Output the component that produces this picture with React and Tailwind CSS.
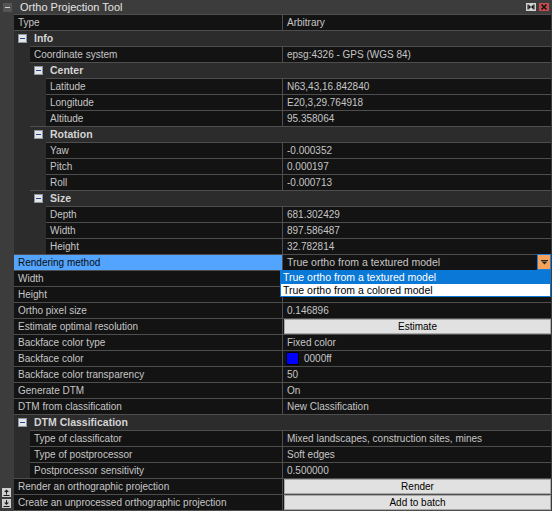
import React from 'react';

const rows = [
  { kind: 'prop', level: 0, label: 'Type', value: 'Arbitrary' },
  { kind: 'group', level: 0, label: 'Info' },
  { kind: 'prop', level: 1, label: 'Coordinate system', value: 'epsg:4326 - GPS (WGS 84)' },
  { kind: 'group', level: 1, label: 'Center' },
  { kind: 'prop', level: 2, label: 'Latitude', value: 'N63,43,16.842840' },
  { kind: 'prop', level: 2, label: 'Longitude', value: 'E20,3,29.764918' },
  { kind: 'prop', level: 2, label: 'Altitude', value: '95.358064' },
  { kind: 'group', level: 1, label: 'Rotation' },
  { kind: 'prop', level: 2, label: 'Yaw', value: '-0.000352' },
  { kind: 'prop', level: 2, label: 'Pitch', value: '0.000197' },
  { kind: 'prop', level: 2, label: 'Roll', value: '-0.000713' },
  { kind: 'group', level: 1, label: 'Size' },
  { kind: 'prop', level: 2, label: 'Depth', value: '681.302429' },
  { kind: 'prop', level: 2, label: 'Width', value: '897.586487' },
  { kind: 'prop', level: 2, label: 'Height', value: '32.782814' },
  { kind: 'select', level: 0, label: 'Rendering method', value: 'True ortho from a textured model' },
  // values of these two rows sit under the open dropdown
  { kind: 'prop', level: 0, label: 'Width', value: '' },
  { kind: 'prop', level: 0, label: 'Height', value: '' },
  { kind: 'prop', level: 0, label: 'Ortho pixel size', value: '0.146896' },
  { kind: 'button', level: 0, label: 'Estimate optimal resolution', value: 'Estimate' },
  { kind: 'prop', level: 0, label: 'Backface color type', value: 'Fixed color' },
  { kind: 'color', level: 0, label: 'Backface color', value: '0000ff' },
  { kind: 'prop', level: 0, label: 'Backface color transparency', value: '50' },
  { kind: 'prop', level: 0, label: 'Generate DTM', value: 'On' },
  { kind: 'prop', level: 0, label: 'DTM from classification', value: 'New Classification' },
  { kind: 'group', level: 0, label: 'DTM Classification' },
  { kind: 'prop', level: 1, label: 'Type of classificator', value: 'Mixed landscapes, construction sites, mines' },
  { kind: 'prop', level: 1, label: 'Type of postprocessor', value: 'Soft edges' },
  { kind: 'prop', level: 1, label: 'Postprocessor sensitivity', value: '0.500000' },
  { kind: 'button', level: 0, label: 'Render an orthographic projection', value: 'Render' },
  { kind: 'button', level: 0, label: 'Create an unprocessed orthographic projection', value: 'Add to batch' },
];

const indentClass = ['w-0', 'w-[16px]', 'w-[32px]'];
const labelClass = ['w-[269px]', 'w-[253px]', 'w-[237px]'];

function Collapse() {
  return (
    <div className="w-[9px] h-[9px] bg-[#e6e6e6] border border-[#8c97aa] flex items-center justify-center shrink-0">
      <div className="w-[5px] h-[1px] bg-[#24459c]" />
    </div>
  );
}

function Value({ row }) {
  if (row.kind === 'button') {
    return (
      <div className="flex-1 pl-[1px]">
        <div className="h-full bg-[#e1e1e1] border border-[#a9a9a9] flex items-center justify-center text-[10px] text-black">
          {row.value}
        </div>
      </div>
    );
  }
  if (row.kind === 'color') {
    return (
      <div className="flex-1 flex items-center pl-[3px] gap-[5px]">
        <div className="w-[13px] h-[13px] bg-[#0000ff] border border-black" />
        <span>{row.value}</span>
      </div>
    );
  }
  if (row.kind === 'select') {
    return (
      <div className="flex-1 flex items-center">
        <span className="flex-1 pl-[4px] text-[10.5px]">{row.value}</span>
        <div className="w-[14px] h-[16px] -mt-[1px] bg-[#f5a35a] border border-[#1d7fe0] flex items-center justify-center">
          <svg width="7" height="5" viewBox="0 0 7 5">
            <rect x="0" y="0" width="7" height="1" fill="#2a2a2a" />
            <polygon points="0.5,1.5 6.5,1.5 3.5,4.5" fill="#2a2a2a" />
          </svg>
        </div>
      </div>
    );
  }
  return <div className="flex-1 flex items-center pl-[4px] truncate">{row.value}</div>;
}

function Row({ row }) {
  const selected = row.kind === 'select';
  return (
    <div className="flex h-[16px]">
      <div className={`${indentClass[row.level]} bg-[#2c2c2c] shrink-0`} />
      {row.kind === 'group' ? (
        <div className="flex-1 flex items-center border-t border-[#4e4e4e] bg-[#2c2c2c] pl-[4px] gap-[7px]">
          <Collapse />
          <span className="font-bold text-[10.5px] text-[#d4d4d4]">{row.label}</span>
        </div>
      ) : (
        <div className="flex-1 flex border-t border-[#4e4e4e] bg-[#131313] min-w-0">
          <div
            className={`${labelClass[row.level]} shrink-0 flex items-center pl-[4px] border-r border-[#4e4e4e] whitespace-nowrap overflow-hidden ${
              selected ? 'bg-[#52a4ff] text-[#0b0b0b]' : ''
            }`}
          >
            {row.label}
          </div>
          <Value row={row} />
        </div>
      )}
    </div>
  );
}

function BatchIcon({ down }) {
  return (
    <svg width="9" height="9" viewBox="0 0 9 9">
      <rect x="0" y="0" width="9" height="9" fill="#cfcfcf" />
      {down ? (
        <>
          <polygon points="2,3.5 7,3.5 4.5,6" fill="#1a1a1a" />
          <rect x="4" y="1" width="1" height="3" fill="#1a1a1a" />
        </>
      ) : (
        <>
          <polygon points="2,4 7,4 4.5,1.5" fill="#1a1a1a" />
          <rect x="4" y="4" width="1" height="2.5" fill="#1a1a1a" />
        </>
      )}
      <rect x="1.5" y="7" width="6" height="1" fill="#1a1a1a" />
    </svg>
  );
}

export default function App() {
  return (
    <div className="relative w-[552px] h-[511px] bg-[#3c3c3c] overflow-hidden font-['Liberation_Sans',Arial,sans-serif] text-[10px] leading-none text-[#c6c6c6] select-none">
      {/* title bar */}
      <div className="h-[14px] flex items-center pl-[3px] pr-[3px]">
        <div className="w-[9px] h-[9px] bg-[#555555] flex items-center justify-center">
          <div className="w-[5px] h-[1px] bg-[#d0d0d0]" />
        </div>
        <span className="ml-[8px] text-[11px] text-[#e4e4e4]">Ortho Projection Tool</span>
        <div className="ml-auto flex items-center gap-[3px]">
          <svg width="10" height="8" viewBox="0 0 10 8">
            <rect width="10" height="8" fill="#d2d2d2" />
            <rect x="1.5" y="1.5" width="1" height="5" fill="#111" />
            <polygon points="2.5,1.5 5,4 2.5,6.5" fill="#111" />
            <rect x="7.5" y="1.5" width="1" height="5" fill="#111" />
            <polygon points="7.5,1.5 5,4 7.5,6.5" fill="#111" />
          </svg>
          <svg width="10" height="8" viewBox="0 0 10 8">
            <rect width="10" height="8" fill="#c84b4b" />
            <path d="M2.5 1.5 L7.5 6.5 M7.5 1.5 L2.5 6.5" stroke="#111" strokeWidth="1.6" />
          </svg>
        </div>
      </div>

      <div className="flex h-[497px]">
        {/* gutter */}
        <div className="w-[14px] shrink-0 flex flex-col justify-end items-center gap-[2px] pb-[3px] pr-[2px]">
          <BatchIcon />
          <BatchIcon down />
        </div>
        {/* property grid */}
        <div className="flex-1 flex flex-col mr-[1px]">
          {rows.map((row, i) => (
            <Row key={i} row={row} />
          ))}
          <div className="h-[1px] bg-[#4e4e4e]" />
        </div>
      </div>

      {/* open dropdown */}
      <div className="absolute left-[280px] top-[270px] w-[271px] h-[27px] border border-[#0a78d7] bg-white flex flex-col text-[10.5px]">
        <div className="h-[13px] bg-[#0a78d7] text-white flex items-center pl-[2px]">True ortho from a textured model</div>
        <div className="h-[12px] text-black flex items-center pl-[2px]">True ortho from a colored model</div>
      </div>
    </div>
  );
}
